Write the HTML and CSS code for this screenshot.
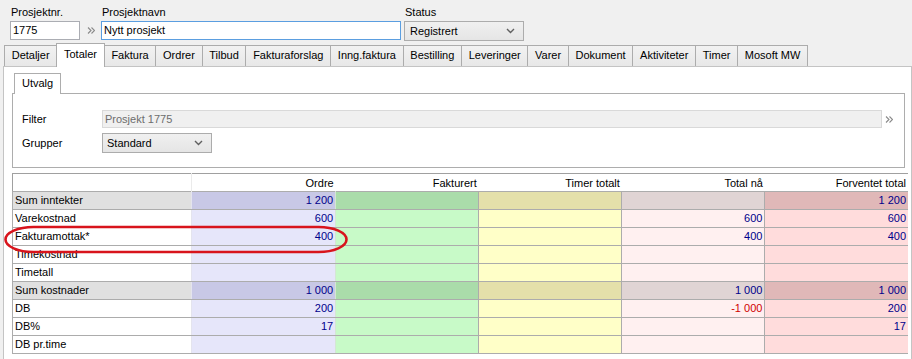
FILE: index.html
```html
<!DOCTYPE html>
<html lang="no">
<head>
  <meta charset="UTF-8">
  <title>Prosjekt 1775 - Totaler</title>
  <link rel="stylesheet" href="styles.css">
</head>
<body>
  <div class="topbar">
    <div class="field">
      <label>Prosjektnr.</label>
      <div class="box nr">1775</div>
    </div>
    <div class="more">
      <svg width="8" height="7" viewBox="0 0 8 7"><path d="M1 0.5l3 3-3 3M4.5 0.5l3 3-3 3" fill="none" stroke="#8a8a8a" stroke-width="1.1"/></svg>
    </div>
    <div class="field">
      <label>Prosjektnavn</label>
      <div class="box name">Nytt prosjekt</div>
    </div>
    <div class="field status">
      <label>Status</label>
      <div class="combo wide">
        <span>Registrert</span>
        <svg width="9" height="6" viewBox="0 0 9 6"><path d="M1 1l3.5 3.5L8 1" fill="none" stroke="#606060" stroke-width="1.4"/></svg>
      </div>
    </div>
  </div>

  <div class="tabs">
    <span class="tab">Detaljer</span>
    <span class="tab active">Totaler</span>
    <span class="tab">Faktura</span>
    <span class="tab">Ordrer</span>
    <span class="tab">Tilbud</span>
    <span class="tab">Fakturaforslag</span>
    <span class="tab">Inng.faktura</span>
    <span class="tab">Bestilling</span>
    <span class="tab">Leveringer</span>
    <span class="tab">Varer</span>
    <span class="tab">Dokument</span>
    <span class="tab">Aktiviteter</span>
    <span class="tab">Timer</span>
    <span class="tab">Mosoft MW</span>
  </div>

  <div class="page">
    <div class="subtabs">
      <span class="subtab">Utvalg</span>
    </div>
    <div class="group">
      <div class="row">
        <label>Filter</label>
        <div class="filter-box">Prosjekt 1775</div>
        <div class="more more-filter">
          <svg width="8" height="7" viewBox="0 0 8 7"><path d="M1 0.5l3 3-3 3M4.5 0.5l3 3-3 3" fill="none" stroke="#8a8a8a" stroke-width="1.1"/></svg>
        </div>
      </div>
      <div class="row">
        <label>Grupper</label>
        <div class="combo narrow">
          <span>Standard</span>
          <svg width="9" height="6" viewBox="0 0 9 6"><path d="M1 1l3.5 3.5L8 1" fill="none" stroke="#606060" stroke-width="1.4"/></svg>
        </div>
      </div>
    </div>

    <div class="grid-wrap">
      <table class="grid">
        <colgroup>
          <col class="c-label">
          <col class="c-ordre">
          <col class="c-num">
          <col class="c-num">
          <col class="c-num">
          <col class="c-num">
        </colgroup>
        <thead>
          <tr>
            <th class="lbl"></th>
            <th>Ordre</th>
            <th>Fakturert</th>
            <th>Timer totalt</th>
            <th>Total nå</th>
            <th>Forventet total</th>
          </tr>
        </thead>
        <tbody>
          <tr class="sum">
            <td class="lbl">Sum inntekter</td>
            <td class="o v">1 200</td><td class="f"></td><td class="t"></td><td class="n"></td><td class="e v">1 200</td>
          </tr>
          <tr>
            <td class="lbl">Varekostnad</td>
            <td class="o v">600</td><td class="f"></td><td class="t"></td><td class="n v">600</td><td class="e v">600</td>
          </tr>
          <tr>
            <td class="lbl">Fakturamottak*</td>
            <td class="o v">400</td><td class="f"></td><td class="t"></td><td class="n v">400</td><td class="e v">400</td>
          </tr>
          <tr>
            <td class="lbl">Timekostnad</td>
            <td class="o"></td><td class="f"></td><td class="t"></td><td class="n"></td><td class="e"></td>
          </tr>
          <tr>
            <td class="lbl">Timetall</td>
            <td class="o"></td><td class="f"></td><td class="t"></td><td class="n"></td><td class="e"></td>
          </tr>
          <tr class="sum">
            <td class="lbl">Sum kostnader</td>
            <td class="o v">1 000</td><td class="f"></td><td class="t"></td><td class="n v">1 000</td><td class="e v">1 000</td>
          </tr>
          <tr>
            <td class="lbl">DB</td>
            <td class="o v">200</td><td class="f"></td><td class="t"></td><td class="n neg">-1 000</td><td class="e v">200</td>
          </tr>
          <tr>
            <td class="lbl">DB%</td>
            <td class="o v">17</td><td class="f"></td><td class="t"></td><td class="n"></td><td class="e v">17</td>
          </tr>
          <tr>
            <td class="lbl">DB pr.time</td>
            <td class="o"></td><td class="f"></td><td class="t"></td><td class="n"></td><td class="e"></td>
          </tr>
        </tbody>
      </table>

      <!-- markering rundt Fakturamottak -->
      <svg class="marker" width="346" height="30" viewBox="0 0 346 30">
        <rect x="1.5" y="2" width="341" height="25" rx="28" ry="12.5" fill="none" stroke="#d8141c" stroke-width="2.6"/>
      </svg>
    </div>
  </div>
</body>
</html>
```

FILE: styles.css
```css
body {
  margin: 0;
  background: #f0f0f0;
  font-family: "Liberation Sans", Arial, sans-serif;
  font-size: 11px;
  color: #000;
  overflow: hidden;
}

/* Topp: prosjektnr, navn og status */
.topbar {
  display: flex;
  align-items: flex-start;
  height: 40px;
  padding: 6px 0 0 10px;
  box-sizing: border-box;
}

.field label {
  display: block;
  height: 15px;
  line-height: 13px;
  padding-left: 1px;
}

.box {
  box-sizing: border-box;
  height: 19px;
  line-height: 17px;
  padding: 0 2px;
  border: 1px solid #abadb3;
  background: #fff;
}

.nr {
  width: 70px;
}

.name {
  width: 300px;
  border-color: #5b9ee0;
}

.more {
  display: flex;
  align-items: center;
  justify-content: center;
  width: 21px;
  height: 19px;
  margin-top: 15px;
}

.status {
  margin-left: 3px;
}

.combo {
  box-sizing: border-box;
  display: flex;
  align-items: center;
  justify-content: space-between;
  height: 20px;
  padding: 0 8px 0 5px;
  border: 1px solid #acacac;
  background: linear-gradient(#f0f0f0, #e5e5e5);
}

.wide {
  width: 120px;
}

.narrow {
  width: 110px;
  padding-left: 4px;
}

/* Faner */
.tabs {
  position: relative;
  z-index: 1;
  display: flex;
  align-items: flex-end;
  height: 23px;
  margin-top: 3px;
  padding-left: 4px;
}

.tab {
  box-sizing: border-box;
  height: 21px;
  line-height: 19px;
  padding: 0 6.7px;
  margin-left: -1px;
  border: 1px solid #acacac;
  border-bottom: none;
  background: linear-gradient(#f2f2f2, #e8e8e8);
  white-space: nowrap;
}

.tab:first-child {
  margin-left: 0;
}

.tab.active {
  height: 24px;
  line-height: 20px;
  margin-bottom: -1px;
  background: #fff;
}

.page {
  margin-left: 3px;
  min-height: 300px;
  padding: 6px 3px 0 8px;
  border: 1px solid #c4c4c4;
  background: #fff;
}

.subtabs {
  position: relative;
  z-index: 1;
  display: flex;
  height: 20px;
  padding-left: 2px;
}

.subtab {
  box-sizing: border-box;
  height: 21px;
  line-height: 19px;
  padding: 0 7px;
  border: 1px solid #adadad;
  border-bottom: none;
  background: #fff;
}

/* Utvalg-panel */
.group {
  margin-right: 3px;
  padding: 16px 0 14px 9px;
  border: 1px solid #adadad;
  background: #fff;
}

.row {
  display: flex;
  align-items: center;
}

.row + .row {
  margin-top: 5px;
}

.row label {
  width: 80px;
}

.filter-box {
  box-sizing: border-box;
  width: 780px;
  height: 18px;
  line-height: 16px;
  padding-left: 2px;
  border: 1px solid #d9d9d9;
  background: #f0f0f0;
  color: #6d6d6d;
}

.more-filter {
  width: 14px;
  height: 18px;
  margin-top: 0;
}

/* Totaltabell */
.grid-wrap {
  position: relative;
  margin-top: 5px;
}

.grid {
  border-collapse: collapse;
  table-layout: fixed;
  width: 896px;
  border-top: 1px solid #a0a0a0;
  border-left: 1px solid #a0a0a0;
}

.c-label {
  width: 179px;
}

.c-ordre {
  width: 144px;
}

.c-num {
  width: 143px;
}

.grid th {
  height: 17px;
  padding: 0 2px;
  font-weight: normal;
  text-align: right;
  background: #fff;
  border-left: none;
  border-right: none;
}

.grid th.lbl {
  border-right: 1px solid #ebebeb;
}

.grid td {
  height: 17px;
  padding: 0 2px;
  line-height: 17px;
  text-align: right;
  white-space: nowrap;
  overflow: hidden;
  border: 1px solid #acacac;
}

.grid td.lbl {
  text-align: left;
  background: #fff;
  border-right-color: #e4e4ee;
}

.grid td.o {
  background: #e6e6fa;
  border-right-color: #d4e6d4;
}

.grid td.f {
  background: #c8fac8;
}

.grid td.t {
  background: #ffffc8;
}

.grid td.n {
  background: #fff0f0;
}

.grid td.e {
  background: #ffdcdc;
  border-right: hidden;
}

.grid tr.sum td.lbl {
  background: #e0e0e0;
}

.grid tr.sum td.o {
  background: #c8c8e6;
}

.grid tr.sum td.f {
  background: #aadcaa;
}

.grid tr.sum td.t {
  background: #e4e0aa;
}

.grid tr.sum td.n {
  background: #e0d4d4;
}

.grid tr.sum td.e {
  background: #e0b8b8;
}

.v {
  color: #00008b;
}

.neg {
  color: #d00000;
}

.marker {
  position: absolute;
  left: -8px;
  top: 52px;
  pointer-events: none;
}
```
